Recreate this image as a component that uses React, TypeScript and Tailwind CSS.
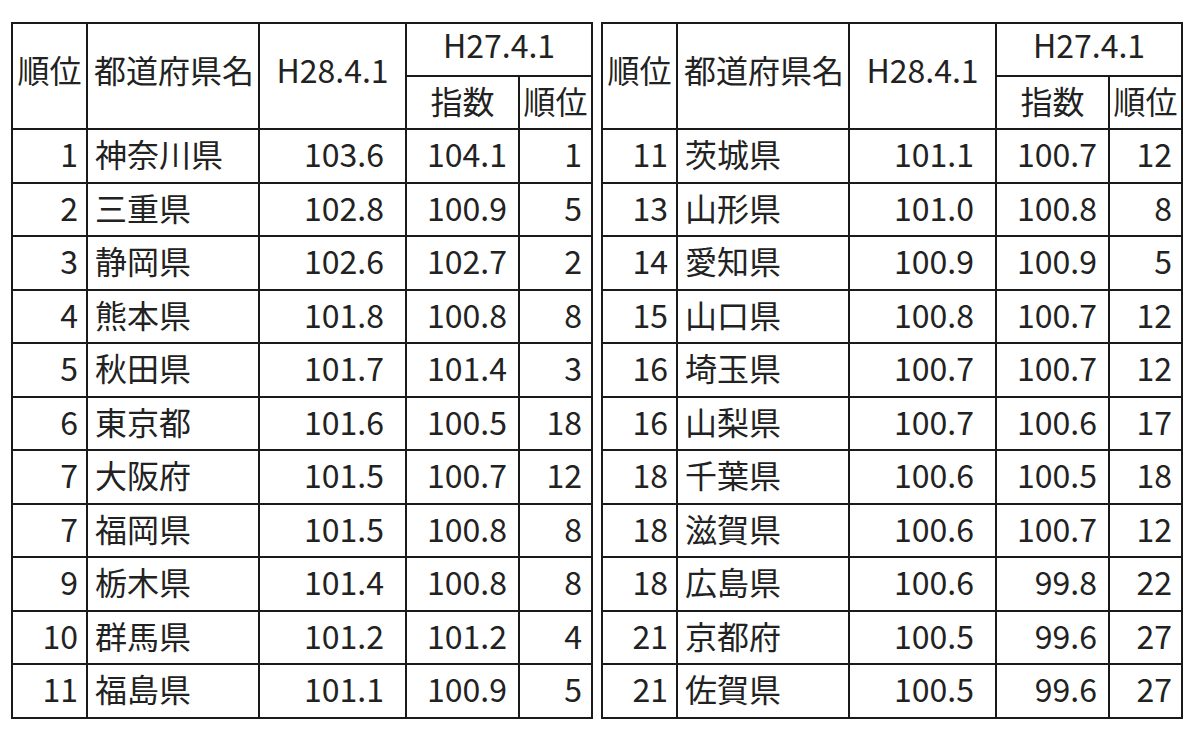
const left: [string, string, string, string, string][] = [
  ["1", "神奈川県", "103.6", "104.1", "1"],
  ["2", "三重県", "102.8", "100.9", "5"],
  ["3", "静岡県", "102.6", "102.7", "2"],
  ["4", "熊本県", "101.8", "100.8", "8"],
  ["5", "秋田県", "101.7", "101.4", "3"],
  ["6", "東京都", "101.6", "100.5", "18"],
  ["7", "大阪府", "101.5", "100.7", "12"],
  ["7", "福岡県", "101.5", "100.8", "8"],
  ["9", "栃木県", "101.4", "100.8", "8"],
  ["10", "群馬県", "101.2", "101.2", "4"],
  ["11", "福島県", "101.1", "100.9", "5"],
];

const right: [string, string, string, string, string][] = [
  ["11", "茨城県", "101.1", "100.7", "12"],
  ["13", "山形県", "101.0", "100.8", "8"],
  ["14", "愛知県", "100.9", "100.9", "5"],
  ["15", "山口県", "100.8", "100.7", "12"],
  ["16", "埼玉県", "100.7", "100.7", "12"],
  ["16", "山梨県", "100.7", "100.6", "17"],
  ["18", "千葉県", "100.6", "100.5", "18"],
  ["18", "滋賀県", "100.6", "100.7", "12"],
  ["18", "広島県", "100.6", "99.8", "22"],
  ["21", "京都府", "100.5", "99.6", "27"],
  ["21", "佐賀県", "100.5", "99.6", "27"],
];

function RankTable({ rows }: { rows: [string, string, string, string, string][] }) {
  const cell = "border-2 border-[#1a1a1a] p-0 leading-none";
  return (
    <table className="border-collapse table-fixed w-[580px]">
      <colgroup>
        <col className="w-[75px]" />
        <col className="w-[172px]" />
        <col className="w-[147px]" />
        <col className="w-[113px]" />
        <col className="w-[73px]" />
      </colgroup>
      <thead>
        <tr className="h-[53px]">
          <th rowSpan={2} className={`${cell} font-normal text-center pb-[14px]`}>順位</th>
          <th rowSpan={2} className={`${cell} font-normal text-left pl-[6px] pb-[14px] whitespace-nowrap`}>都道府県名</th>
          <th rowSpan={2} className={`${cell} font-normal text-center pb-[14px]`}>H28.4.1</th>
          <th colSpan={2} className={`${cell} font-normal text-center pb-[12px]`}>H27.4.1</th>
        </tr>
        <tr className="h-[53px]">
          <th className={`${cell} font-normal text-center pb-[6px]`}>指数</th>
          <th className={`${cell} font-normal text-center pb-[6px]`}>順位</th>
        </tr>
      </thead>
      <tbody>
        {rows.map((r, i) => (
          <tr key={i} className="h-[53.5px]">
            <td className={`${cell} text-right pr-[8px] pb-[5px]`}>{r[0]}</td>
            <td className={`${cell} text-left pl-[7px] pb-[5px]`}>{r[1]}</td>
            <td className={`${cell} text-right pr-[21px] pb-[5px]`}>{r[2]}</td>
            <td className={`${cell} text-right pr-[11px] pb-[5px]`}>{r[3]}</td>
            <td className={`${cell} text-right pr-[9px] pb-[5px]`}>{r[4]}</td>
          </tr>
        ))}
      </tbody>
    </table>
  );
}

export default function App() {
  return (
    <div
      className="w-[1200px] h-[735px] bg-white text-[#222222] text-[32px] overflow-hidden"
      style={{ fontFamily: '"Noto Sans CJK JP", "Noto Sans", sans-serif' }}
    >
      <div className="flex gap-[8px] pt-[22px] pl-[11px]">
        <RankTable rows={left} />
        <RankTable rows={right} />
      </div>
    </div>
  );
}
